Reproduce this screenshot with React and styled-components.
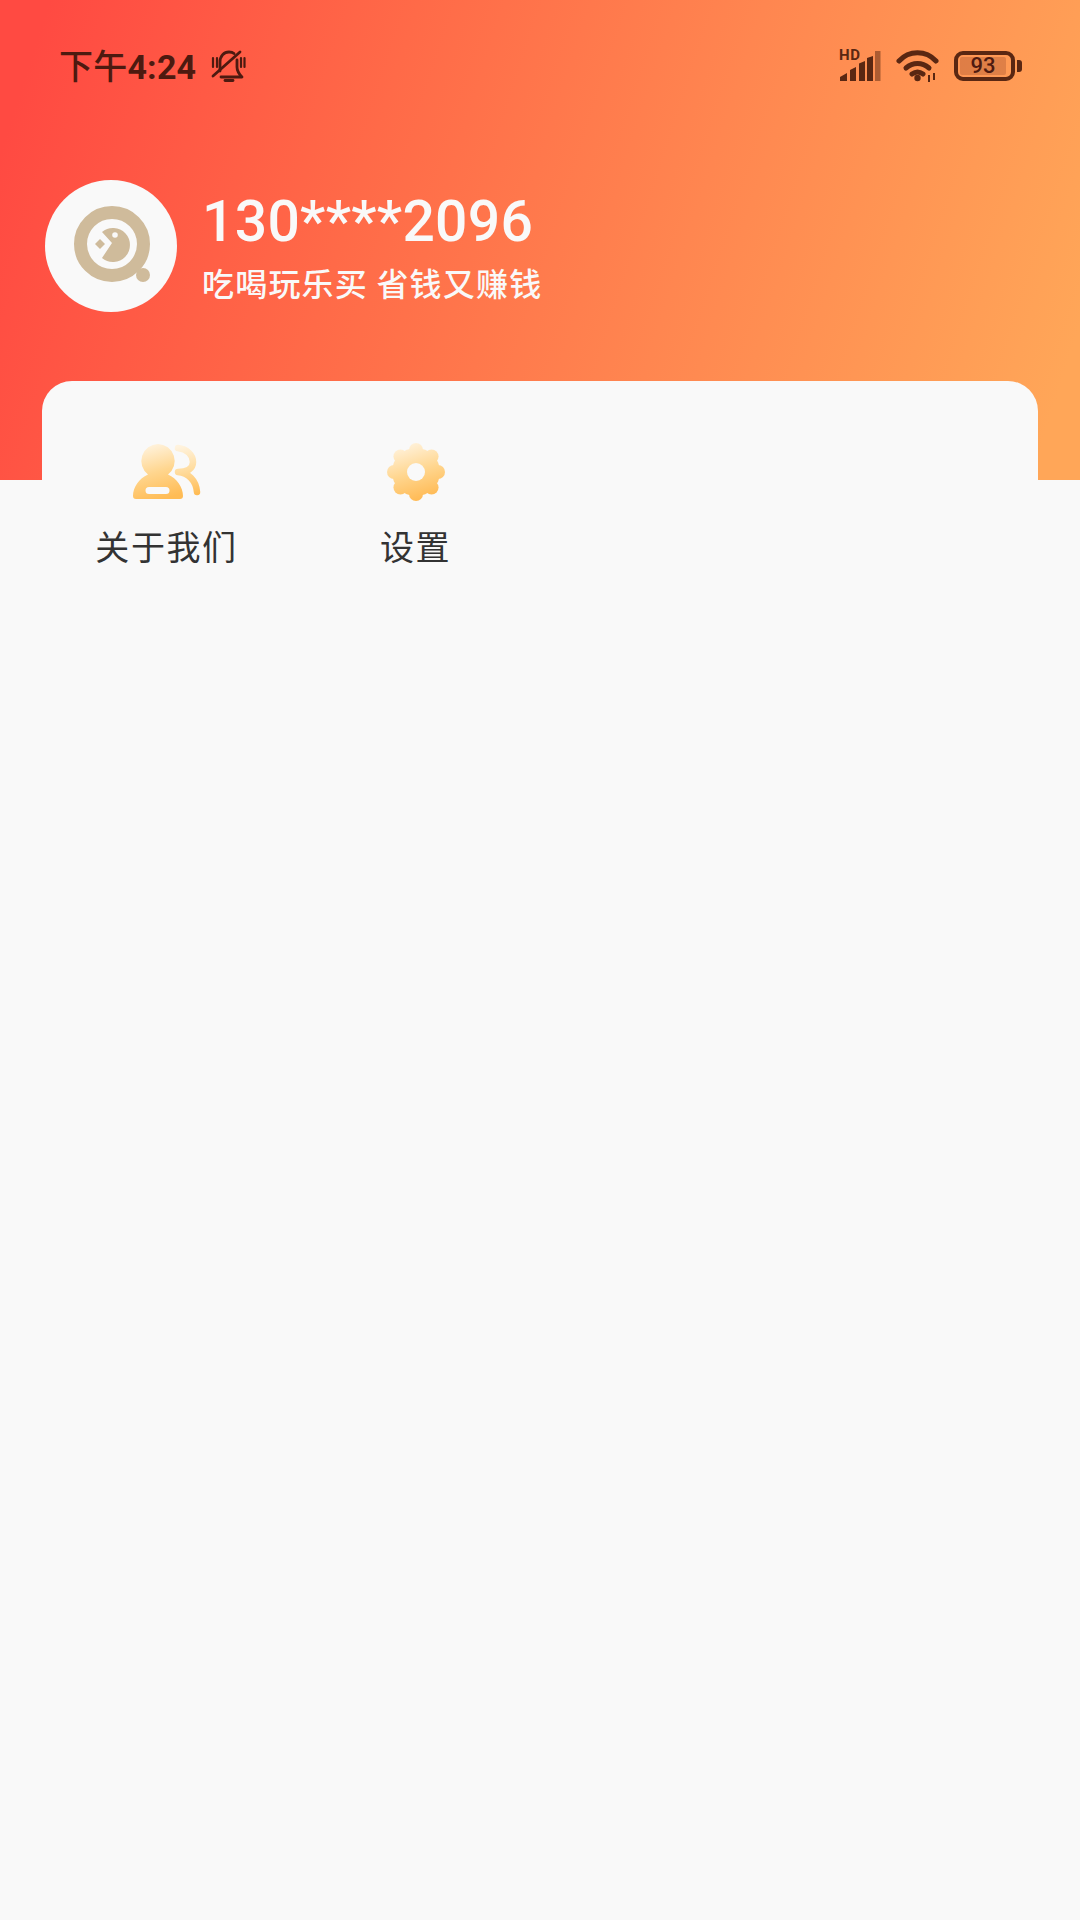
import React from "react";
import styled, { createGlobalStyle } from "styled-components";

const Global = createGlobalStyle`
  html, body { margin: 0; padding: 0; background: #f9f9f9; }
  * { box-sizing: border-box; }
`;

const Page = styled.div`
  width: 1080px;
  height: 1920px;
  overflow: hidden;
  background: #f9f9f9;
  font-family: "Noto Sans CJK SC", "Noto Sans", sans-serif;
`;

const Hero = styled.header`
  height: 480px;
  background: linear-gradient(108deg, #ff4a42 4%, #ff6a48 34%, #ff8650 62%, #ffa658 96%);
`;

const StatusBar = styled.div`
  height: 132px;
  padding: 0 58px 0 59px;
  display: flex;
  align-items: center;
  justify-content: space-between;
  color: #4d1a10;
`;

const StatusLeft = styled.div`
  display: flex;
  align-items: center;
  gap: 13px;
`;

const Clock = styled.span`
  font-family: Roboto, "Noto Sans CJK SC", sans-serif;
  font-size: 34px;
  font-weight: 700;
  line-height: 40px;
  letter-spacing: 0.2px;
`;

const ClockPeriod = styled.span`
  font-family: "Noto Sans CJK SC", sans-serif;
  font-size: 34px;
  font-weight: 500;
`;

const StatusRight = styled.div`
  display: flex;
  align-items: center;
  color: #5a2712;
`;

const SignalWrap = styled.div`
  position: relative;
  width: 42px;
  height: 30px;
  margin-right: 15px;
`;

const HdTag = styled.span`
  position: absolute;
  left: 0;
  top: -3px;
  font-family: Roboto, sans-serif;
  font-size: 15px;
  font-weight: 700;
  line-height: 14px;
  letter-spacing: 0.6px;
`;

const WifiWrap = styled.div`
  display: flex;
  margin-right: 12px;
`;

const Battery = styled.div`
  display: flex;
  align-items: center;
  gap: 2px;
`;

const BatteryShell = styled.div`
  width: 61px;
  height: 30px;
  border: 4px solid #5a2712;
  border-radius: 9px;
  padding: 2px;
  display: flex;
`;

const BatteryLevel = styled.div`
  flex: 1;
  margin-right: 3px;
  background: rgba(150, 70, 40, 0.3);
  border-radius: 2px;
  display: flex;
  align-items: center;
  justify-content: center;
  font-family: Roboto, sans-serif;
  font-size: 22px;
  font-weight: 500;
  line-height: 20px;
  color: #4d1a10;
`;

const BatteryNub = styled.div`
  width: 5px;
  height: 12px;
  border-radius: 0 3px 3px 0;
  background: #5a2712;
`;

const Profile = styled.section`
  margin: 48px 0 0 45px;
  display: flex;
  align-items: center;
  gap: 25px;
`;

const Avatar = styled.div`
  width: 132px;
  height: 132px;
  border-radius: 50%;
  background: #f9f9f9;
  display: flex;
  align-items: center;
  justify-content: center;
`;

const ProfileText = styled.div`
  padding-top: 4px;
  display: flex;
  flex-direction: column;
  color: #f9f9f9;
`;

const Phone = styled.div`
  font-family: Roboto, sans-serif;
  font-size: 57px;
  font-weight: 500;
  line-height: 60px;
  letter-spacing: 0.3px;
`;

const Slogan = styled.div`
  font-size: 32px;
  font-weight: 500;
  line-height: 44px;
  letter-spacing: 1.2px;
  margin-top: 8px;
`;

const Card = styled.section`
  margin: 69px 42px 0;
  padding-top: 58px;
  background: #f9f9f9;
  border-radius: 30px 30px 0 0;
  display: grid;
  grid-template-columns: repeat(4, 1fr);
`;

const Entry = styled.div`
  display: flex;
  flex-direction: column;
  align-items: center;
`;

const EntryIcon = styled.div`
  height: 66px;
  display: flex;
  align-items: center;
  justify-content: center;
`;

const EntryLabel = styled.div`
  margin-top: 16px;
  font-size: 34px;
  line-height: 50px;
  letter-spacing: 1.6px;
  color: #333333;
`;

const BellOff = () => (
  <svg width="38" height="38" viewBox="0 0 38 38" fill="none" stroke="currentColor" strokeWidth="2.8" strokeLinecap="round" strokeLinejoin="round">
    <path d="M11 24V15c0-6 4-10 9-10 2 0 4 .6 5 1.500" />
    <path d="M28 13v7c0 4 2 7 5 10H12" />
    <path d="M16 33.500h8" />
    <path d="M4 29 31 5" />
    <path d="M4 11v9M8 11v9M32 11v9M35.500 11v9" strokeWidth="2.200" />
  </svg>
);

const Bars = () => (
  <svg width="42" height="30" viewBox="0 0 42 30" fill="currentColor">
    <path d="M1 30v-4l7-4v8z" />
    <path d="M11 30V19l6-3v14z" />
    <path d="M20 30V12.500l6-2.500v20z" />
    <path d="M28 30V7l6-2v25z" />
    <rect x="36" y="0" width="5.500" height="30" opacity="0.5" />
  </svg>
);

const Wifi = () => (
  <svg width="46" height="32" viewBox="0 0 46 32" fill="none" stroke="currentColor" strokeWidth="5" strokeLinecap="round">
    <path d="M3 11C13 0 30 0 40 11" />
    <path d="M10 18c7-6 16-6 23 0" />
    <path d="M16 24c4-3 7-3 11 0" />
    <circle cx="21.500" cy="28" r="3.200" fill="currentColor" stroke="none" />
    <path d="M33 25v7M38 23v7" strokeWidth="2" strokeLinecap="butt" />
  </svg>
);

const Logo = () => (
  <svg width="132" height="132" viewBox="0 0 132 132">
    <circle cx="67" cy="64" r="31.500" fill="none" stroke="#cfbb9b" strokeWidth="13" />
    <circle cx="98" cy="95" r="7" fill="#cfbb9b" />
    <path d="M57 52A17 17 0 1 1 57 78L67 63Z" fill="#cfbb9b" />
    <path d="M55 59l5 5-5 5-5-5z" fill="#cfbb9b" />
    <circle cx="70" cy="55" r="2.800" fill="#f9f9f9" />
  </svg>
);

const AboutIcon = () => (
  <svg width="72" height="58" viewBox="0 0 72 58">
    <defs>
      <linearGradient id="aboutFill" x1="0.35" y1="0" x2="0.6" y2="1">
        <stop offset="0" stopColor="#fff3de" />
        <stop offset="0.5" stopColor="#ffd68f" />
        <stop offset="1" stopColor="#ffbc55" />
      </linearGradient>
      <linearGradient id="aboutStroke" gradientUnits="userSpaceOnUse" x1="50" y1="3" x2="60" y2="52">
        <stop offset="0" stopColor="#fff3de" />
        <stop offset="0.5" stopColor="#ffdc9e" />
        <stop offset="1" stopColor="#ffbc55" />
      </linearGradient>
    </defs>
    <path
      fill="url(#aboutFill)"
      fillRule="evenodd"
      d="M27 1a17 17 0 0 1 10 30.500c9 4 15 13 15 21.500a3 3 0 0 1-3 3H5a3 3 0 0 1-3-3c0-8.500 6-17.500 15-21.500A17 17 0 0 1 27 1zM18 44a3.500 3.500 0 0 0 0 7h17a3.500 3.500 0 0 0 0-7z"
    />
    <path
      d="M47 5c9 1 15 7 15 14s-6 10-15 10c10 1 18 8 19 20"
      fill="none"
      stroke="url(#aboutStroke)"
      strokeWidth="6.500"
      strokeLinecap="round"
      strokeLinejoin="round"
    />
  </svg>
);

const lobes = [0, 45, 90, 135, 180, 225, 270, 315].map((a) => {
  const r = (a * Math.PI) / 180;
  return { x: 32 + 22 * Math.cos(r), y: 32 + 22 * Math.sin(r) };
});

const GearIcon = () => (
  <svg width="64" height="64" viewBox="0 0 64 64">
    <defs>
      <linearGradient id="gearFill" gradientUnits="userSpaceOnUse" x1="22" y1="3" x2="40" y2="61">
        <stop offset="0" stopColor="#fff3de" />
        <stop offset="0.5" stopColor="#ffd68f" />
        <stop offset="1" stopColor="#ffb850" />
      </linearGradient>
      <mask id="gearHole">
        <rect width="64" height="64" fill="#fff" />
        <circle cx="32" cy="32" r="9" fill="#000" />
      </mask>
    </defs>
    <g mask="url(#gearHole)" fill="url(#gearFill)">
      <circle cx="32" cy="32" r="24" />
      {lobes.map((l, i) => (
        <circle key={i} cx={l.x} cy={l.y} r="7" />
      ))}
    </g>
  </svg>
);

export default function App() {
  return (
    <>
      <Global />
      <Page>
        <Hero>
          <StatusBar>
            <StatusLeft>
              <Clock>
                <ClockPeriod>下午</ClockPeriod>4:24
              </Clock>
              <BellOff />
            </StatusLeft>
            <StatusRight>
              <SignalWrap>
                <HdTag>HD</HdTag>
                <Bars />
              </SignalWrap>
              <WifiWrap>
                <Wifi />
              </WifiWrap>
              <Battery>
                <BatteryShell>
                  <BatteryLevel>93</BatteryLevel>
                </BatteryShell>
                <BatteryNub />
              </Battery>
            </StatusRight>
          </StatusBar>
          <Profile>
            <Avatar>
              <Logo />
            </Avatar>
            <ProfileText>
              <Phone>130****2096</Phone>
              <Slogan>吃喝玩乐买 省钱又赚钱</Slogan>
            </ProfileText>
          </Profile>
          <Card>
            <Entry>
              <EntryIcon>
                <AboutIcon />
              </EntryIcon>
              <EntryLabel>关于我们</EntryLabel>
            </Entry>
            <Entry>
              <EntryIcon>
                <GearIcon />
              </EntryIcon>
              <EntryLabel>设置</EntryLabel>
            </Entry>
          </Card>
        </Hero>
      </Page>
    </>
  );
}
